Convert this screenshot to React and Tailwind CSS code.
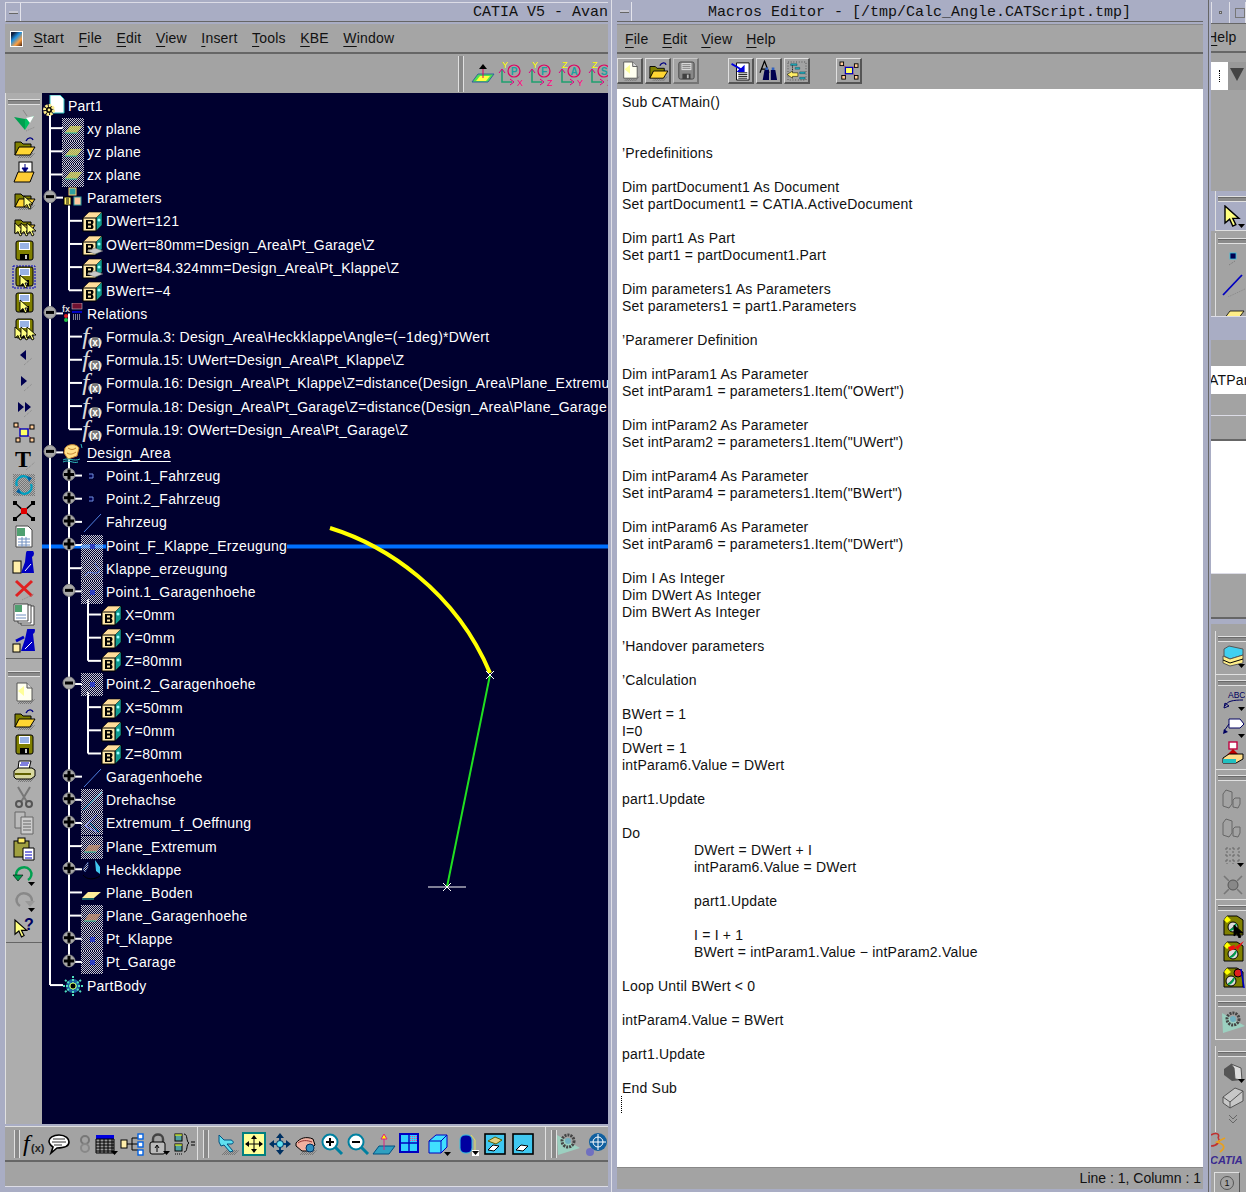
const Ic = ({ children, w = 24, h = 24 }) => (
  <svg viewBox={`0 0 ${w} ${h}`} width={w} height={h} className="block shrink-0">{children}</svg>
)

const Sh = () => <path d="M5 23L19 23L23 18L10 18Z" fill="url(#dith)" />
const Dd = ({ x = 18, y = 19 }) => <path d={`M${x} ${y}h7l-3.5 4z`} fill="#000" />
const Cursor = ({ x = 0, y = 0, c = "#ffff80", s = 1 }) => (
  <path transform={`translate(${x} ${y}) scale(${s})`} d="M0 0L0 11L3 8.5L5 13L7 12L5 8L9 8Z" fill={c} stroke="#000" strokeWidth="0.9" />
)
const FolderO = () => (
  <>
    <path d="M3 20V7H9L11 9H19V13H7L3 20Z" fill="#808000" stroke="#000" />
    <path d="M3 20L7 12H23L18 20Z" fill="#ffd633" stroke="#000" />
  </>
)
const FloppyB = ({ lines = "#3366cc" }) => (
  <>
    <rect x="4" y="2" width="17" height="19" rx="2" fill="#808000" stroke="#000" />
    <rect x="7" y="3" width="11" height="8" fill="#fff" />
    <path d="M8 5h9M8 7h9M8 9h9" stroke={lines} />
    <rect x="8" y="15" width="9" height="6" fill="#000" />
    <rect x="13" y="16" width="2" height="4" fill="#ccc" />
  </>
)

const icons = {
  funnel: <Ic><path d="M11 1L15 7" stroke="#888" /><path d="M2 8L13 10L13 21Z" fill="#00a050" /><path d="M13 10L22 7L13 21Z" fill="#00c060" /><path d="M14 9L22 7L18 14Z" fill="#fff" /><path d="M14 22L23 18" stroke="#888" strokeDasharray="1 1" /></Ic>,
  open: <Ic><Sh /><FolderO /><path d="M14 6C16 2 20 2 21 5" fill="none" stroke="#000080" strokeWidth="1.4" /></Ic>,
  docFolder: <Ic><rect x="7" y="1" width="13" height="13" fill="#fff" stroke="#000" /><path d="M13 3v6M10 7l3 4 3-4z" fill="#000080" stroke="#000080" /><path d="M2 21L6 11H22L18 21Z" fill="#ffcc33" stroke="#000" /></Ic>,
  folderCur: <Ic><Sh /><FolderO /><Cursor x={12} y={9} /></Ic>,
  folderCurs: <Ic><FolderO /><Cursor x={3} y={10} /><Cursor x={9} y={10} /><Cursor x={15} y={10} /></Ic>,
  save: <Ic><FloppyB /></Ic>,
  saveSel: <Ic><rect x="1" y="1" width="22" height="22" fill="none" stroke="#0000c0" strokeDasharray="2 1" /><FloppyB /><Cursor x={8} y={10} /></Ic>,
  saveCur: <Ic><FloppyB /><Cursor x={8} y={9} /></Ic>,
  saveCurs: <Ic><FloppyB /><Cursor x={3} y={10} /><Cursor x={9} y={10} /><Cursor x={15} y={10} /></Ic>,
  prev: <Ic><path d="M8 12L14 7V17Z" fill="#000050" /><path d="M12 22L20 15" stroke="#888" strokeDasharray="1 1" /></Ic>,
  next: <Ic><path d="M15 12L9 7V17Z" fill="#000050" /><path d="M12 22L20 15" stroke="#888" strokeDasharray="1 1" /></Ic>,
  next2: <Ic><path d="M12 12L6 7V17ZM19 12L13 7V17Z" fill="#000050" /><path d="M12 22L20 15" stroke="#888" strokeDasharray="1 1" /></Ic>,
  nodes: <Ic><path d="M4 4L12 11M20 6L12 11M6 18L12 11M20 18L12 11" stroke="#cc3366" /><rect x="8" y="8" width="8" height="7" fill="#ffff66" stroke="#0000c0" strokeWidth="1.4" /><rect x="2" y="2" width="4" height="4" fill="#ffcc99" stroke="#000" /><rect x="18" y="4" width="4" height="4" fill="#ffcc99" stroke="#000" /><rect x="4" y="17" width="4" height="4" fill="#ffcc99" stroke="#000" /><rect x="18" y="17" width="4" height="4" fill="#ffcc99" stroke="#000" /></Ic>,
  text: <Ic><text x="3" y="20" fontFamily="Liberation Serif" fontWeight="700" fontSize="24" fill="#000">T</text><path d="M14 23L23 15" stroke="#888" strokeDasharray="1 1" /></Ic>,
  refresh: <Ic><rect x="1" y="1" width="22" height="22" fill="url(#dith)" /><path d="M5 13A7 7 0 0 1 17 6" fill="none" stroke="#00a0c0" strokeWidth="2.4" /><path d="M19 11A7 7 0 0 1 7 18" fill="none" stroke="#00a0c0" strokeWidth="2.4" /><path d="M15 3l5 2-3 4zM9 21l-5-2 3-4z" fill="#0060a0" /></Ic>,
  xnodes: <Ic><path d="M3 4L21 20M21 4L3 20" stroke="#000" strokeWidth="1.6" /><rect x="9" y="9" width="6" height="6" fill="#e00000" /><path d="M1 2h4v4H1zM19 2h4v4h-4zM1 18h4v4H1zM19 18h4v4h-4z" fill="#000" /></Ic>,
  sheet: <Ic><path d="M4 1H16L20 5V22H4Z" fill="#fff" stroke="#444" /><rect x="5" y="3" width="8" height="8" fill="#50a070" /><path d="M6 14h12M6 17h12M6 20h12M10 12v10M14 12v10" stroke="#7090c0" /></Ic>,
  cylPerson: <Ic><rect x="1" y="10" width="8" height="12" fill="#ffeeaa" stroke="#000" /><path d="M14 2a4 4 0 1 1 6 4L22 22H9L13 11Z" fill="#0000c0" /><path d="M13 20L19 13" stroke="#fff" /></Ic>,
  redX: <Ic><path d="M4 4L20 19M20 4L4 19" stroke="#e02020" strokeWidth="3" /><path d="M10 23L22 17" stroke="#888" strokeDasharray="1 1" /></Ic>,
  sheets: <Ic><path d="M9 3H22V22H9Z" fill="#fff" stroke="#444" /><path d="M6 2H19V20H6Z" fill="#fff" stroke="#444" /><path d="M2 1H16V18H2Z" fill="#fff" stroke="#444" /><rect x="3" y="2" width="7" height="7" fill="#50a070" /><path d="M4 12h10M4 15h10" stroke="#7090c0" /></Ic>,
  persons: <Ic><rect x="1" y="15" width="7" height="8" fill="#ffeeaa" stroke="#000" /><path d="M15 1a4 4 0 1 1 6 4L23 22H9L13 10Z" fill="#0000c0" /><path d="M4 12L12 8" stroke="#0000c0" strokeWidth="3" /><path d="M13 20L20 13" stroke="#fff" /></Ic>,
  newDoc: <Ic><Sh /><path d="M5 2H15L20 7V20H5Z" fill="#fffff0" stroke="#555" /><path d="M6 10L12 5L12 15Z" fill="#ffff99" /><path d="M15 2V7H20" fill="#ddd" stroke="#555" /></Ic>,
  print: <Ic><Sh /><path d="M7 2H19L17 10H6Z" fill="#fff" stroke="#000" /><path d="M9 4h8M8 6h8" stroke="#0000c0" /><path d="M2 12L6 9H20L23 11V17L19 20H4L2 18Z" fill="#d8d8a0" stroke="#000" /><path d="M3 15H19" stroke="#606000" strokeWidth="2" /></Ic>,
  scissors: <Ic><path d="M6 2L15 17M18 2L9 17" stroke="#777" strokeWidth="2" /><circle cx="7" cy="19" r="3" fill="none" stroke="#555" strokeWidth="2" /><circle cx="17" cy="19" r="3" fill="none" stroke="#555" strokeWidth="2" /></Ic>,
  copy: <Ic><path d="M3 1H13V17H3Z" fill="#bbb" stroke="#666" /><path d="M9 6H21V23H9Z" fill="#ccc" stroke="#666" /><path d="M11 10h8M11 13h8M11 16h8M11 19h8" stroke="#666" /></Ic>,
  paste: <Ic><rect x="2" y="4" width="15" height="16" fill="#a0a040" stroke="#000" /><rect x="6" y="1" width="7" height="5" fill="#ffee66" stroke="#000" /><path d="M11 11H22V23H11Z" fill="#fff" stroke="#000" /><path d="M13 15h7M13 18h7M13 21h7" stroke="#0000c0" /></Ic>,
  undo: <Ic><path d="M4 12A8 8 0 0 1 18 7C21 11 19 15 16 17" fill="none" stroke="#00a050" strokeWidth="2.4" /><path d="M1 12H11L6 18Z" fill="#00a050" stroke="#000" strokeWidth="0.6" /><Dd x={16} y={19} /></Ic>,
  redo: <Ic><path d="M20 12A8 8 0 0 0 6 7C3 11 5 15 8 17" fill="none" stroke="#888" strokeWidth="2.4" /><path d="M23 12H13L18 18Z" fill="#999" /><Dd x={16} y={19} /></Ic>,
  help: <Ic><Cursor x={3} y={5} s={1.3} /><text x="12" y="15" fontFamily="Liberation Sans" fontWeight="700" fontSize="16" fill="#000060">?</text></Ic>,
  fx: <Ic><text x="2" y="19" fontFamily="Liberation Serif" fontStyle="italic" fontSize="24" fill="#000">f</text><text x="10" y="20" fontFamily="Liberation Sans" fontWeight="700" fontSize="11" fill="#222">(x)</text></Ic>,
  bubble: <Ic><path d="M12 3C19 3 22 7 22 10C22 15 15 16 10 16L4 21L6 15C3 13 2 11 2 9C2 6 6 3 12 3Z" fill="#fff" stroke="#000" strokeWidth="1.6" /><path d="M6 7h12M5 10h14M7 13h8" stroke="#333" /></Ic>,
  chain: <Ic><rect x="8" y="4" width="8" height="8" rx="4" fill="none" stroke="#777" strokeWidth="2" /><circle cx="12" cy="16" r="4" fill="none" stroke="#888" strokeWidth="2" /></Ic>,
  table: <Ic><rect x="2" y="3" width="18" height="4" fill="#0000e0" /><path d="M2 7H20V21H2Z" fill="#999" stroke="#000" /><path d="M2 10H20M2 13H20M2 16H20M2 19H20M6 7V21M10 7V21M14 7V21M18 7V21" stroke="#000" /><Dd x={17} y={19} /></Ic>,
  diagram: <Ic><path d="M6 12H18M12 6V18M12 6H18M12 18H18" stroke="#000" /><rect x="1" y="8" width="6" height="8" fill="#ffeeaa" stroke="#000" /><rect x="18" y="2" width="5" height="5" fill="#fff" stroke="#0060e0" strokeWidth="1.4" /><rect x="18" y="10" width="5" height="5" fill="#fff" stroke="#0060e0" strokeWidth="1.4" /><rect x="18" y="18" width="5" height="5" fill="#fff" stroke="#0060e0" strokeWidth="1.4" /></Ic>,
  lock: <Ic><path d="M7 11V7C7 1 17 1 17 7V11" fill="none" stroke="#444" strokeWidth="2.4" /><rect x="4" y="10" width="15" height="12" rx="2" fill="#bbb" stroke="#000" /><path d="M11 14v6M9 16l2-3 2 3" stroke="#000" fill="none" /><Dd x={17} y={19} /></Ic>,
  bracket: <Ic><rect x="3" y="2" width="7" height="7" fill="#50a0a0" stroke="#000" /><rect x="3" y="12" width="7" height="7" fill="#50a0a0" stroke="#000" /><path d="M3 3h7M3 13h7" stroke="#ffff00" /><path d="M12 2C16 2 14 10 17 11C14 12 16 20 12 20" fill="none" stroke="#000" /><path d="M19 10h4M19 13h4" stroke="#000" /><path d="M3 22h7" stroke="#000" strokeDasharray="1 1" /></Ic>,
  plane: <Ic><Sh /><path d="M3 3L8 8L15 8C18 9 18 12 15 12L11 12L17 19L14 20L8 13L5 14L3 10Z" fill="#60e0f0" stroke="#005080" /></Ic>,
  fit: <Ic><rect x="1" y="1" width="22" height="22" fill="#ffff99" stroke="#008080" strokeWidth="2" /><path d="M12 4V20M4 12H20" stroke="#000" /><path d="M12 3l-3 4h6zM12 21l-3-4h6zM3 12l4-3v6zM21 12l-4-3v6z" fill="#000" /></Ic>,
  move: <Ic><path d="M12 3V21M3 12H21" stroke="#004080" strokeWidth="2" /><path d="M12 1l-4 5h8zM12 23l-4-5h8zM1 12l5-4v8zM23 12l-5-4v8z" fill="#003060" /><circle cx="12" cy="12" r="3.5" fill="#60e0f0" stroke="#003060" /></Ic>,
  hand: <Ic><Sh /><path d="M2 11C6 6 12 4 19 7L21 13L14 19H8L2 14Z" fill="#f0b0a0" stroke="#000" /><path d="M4 11C8 8 13 8 18 10" stroke="#903030" fill="none" /><circle cx="16" cy="16" r="4" fill="#3090c0" stroke="#003060" /></Ic>,
  zoomIn: <Ic><path d="M15 15L22 22" stroke="#0080a0" strokeWidth="3" /><circle cx="10" cy="10" r="7.5" fill="#fff" stroke="#0080a0" strokeWidth="2" /><path d="M10 6V14M6 10H14" stroke="#000" strokeWidth="2" /></Ic>,
  zoomOut: <Ic><path d="M15 15L22 22" stroke="#0080a0" strokeWidth="3" /><circle cx="10" cy="10" r="7.5" fill="#fff" stroke="#0080a0" strokeWidth="2" /><path d="M6 10H14" stroke="#000" strokeWidth="2" /></Ic>,
  normal: <Ic><path d="M1 22L7 14H23L17 22Z" fill="#30a0c0" stroke="#005080" /><path d="M12 18V5" stroke="#e02080" /><path d="M12 2l-3 5h6z" fill="#ffff00" stroke="#e02080" /></Ic>,
  views: <Ic><rect x="2" y="2" width="18" height="18" fill="#30d0ff" stroke="#0000c0" strokeWidth="2" /><path d="M11 2V20M2 11H20" stroke="#0000c0" strokeWidth="1.4" /><rect x="12" y="3" width="7" height="7" fill="url(#pink)" /></Ic>,
  cube: <Ic><path d="M2 9L9 3H20V15L14 21H2Z" fill="#40e0ff" stroke="#0000c0" /><path d="M2 9H14V21M14 9L20 3" fill="none" stroke="#0000c0" /><Dd x={17} y={20} /></Ic>,
  cyl: <Ic><rect x="5" y="3" width="12" height="18" rx="5" fill="#0000a0" stroke="#30c0e0" /><path d="M16 3L20 8V20" stroke="#e0e060" fill="none" /><rect x="17" y="18" width="7" height="6" fill="#fff" /><Dd x={17} y={19} /></Ic>,
  shade: <Ic><rect x="2" y="2" width="20" height="20" fill="#40c8f0" stroke="#000" strokeWidth="1.6" /><path d="M5 9L12 5L19 8L13 12Z" fill="#e0d080" stroke="#606000" /><path d="M5 18L10 13L16 14L11 19Z" fill="#fff" stroke="#000" /></Ic>,
  shade2: <Ic><rect x="2" y="2" width="20" height="20" fill="#40c8f0" stroke="#000" strokeWidth="1.6" /><path d="M5 18L10 13L17 14L12 19Z" fill="#fff" stroke="#000" /></Ic>,
  gears: <Ic><circle cx="8" cy="13" r="6" fill="none" stroke="#444" strokeWidth="3" strokeDasharray="2 1" /><circle cx="17" cy="9" r="5" fill="none" stroke="#555" strokeWidth="3" strokeDasharray="2 1" /><path d="M3 22L23 15" stroke="#9ccfc0" /></Ic>,
  target: <Ic><circle cx="14" cy="10" r="9" fill="#1060a0" /><circle cx="14" cy="10" r="5" fill="none" stroke="#fff" /><path d="M14 2V18M6 10H22" stroke="#fff" /><circle cx="6" cy="20" r="4" fill="#7070c0" /></Ic>,
  axis0: <Ic><path d="M1 20L7 12H23L17 20Z" fill="#50e050" stroke="#3060a0" /><path d="M5 19L9 14H19L15 19Z" fill="#ffff40" /><path d="M12 16V5" stroke="#e00060" /><path d="M12 2l-4 5h8z" fill="#000" /></Ic>,
  cutBin: <Ic><path d="M5 4L2 8V20L8 22L11 18V6Z" fill="none" stroke="#666" /><path d="M14 12L12 14V21L17 22L19 18V12Z" fill="none" stroke="#666" /></Ic>,
  grid: <Ic><path d="M4 5H20M4 11H20M4 17H20M6 3V20M12 3V20M18 3V20" stroke="#666" strokeDasharray="2 2" /><Dd x={16} y={19} /></Ic>,
  crossSq: <Ic><circle cx="12" cy="12" r="5" fill="#888" stroke="#555" /><path d="M3 3L8 8M21 3L16 8M3 21L8 16M21 21L16 16" stroke="#777" strokeWidth="1.6" /></Ic>,
  layers: <Ic><path d="M3 4L8 1L22 4V10L9 14L3 11Z" fill="#40d0f0" stroke="#555" /><path d="M2 11L9 14L22 10V18L9 21L2 18Z" fill="#ffee88" stroke="#555" /><path d="M2 15L9 18L22 14" fill="none" stroke="#000" /><Dd x={17} y={19} /></Ic>,
  abc: <Ic><text x="7" y="9" fontFamily="Liberation Sans" fontSize="8.5" fill="#000060">ABC</text><path d="M4 17C6 12 12 11 22 11M3 19l1-5 4 3z" fill="none" stroke="#000060" /><Dd x={17} y={18} /></Ic>,
  flag: <Ic><path d="M8 4H19L23 9L19 13H8Z" fill="#fff" stroke="#000060" /><path d="M3 16L8 9" stroke="#000060" /><path d="M2 19l1-5 4 3z" fill="#000060" /><Dd x={17} y={19} /></Ic>,
  stamp: <Ic><rect x="8" y="1" width="8" height="7" fill="#fff" stroke="#c00040" strokeWidth="1.4" /><path d="M12 8L6 14H18Z" fill="#c00000" /><path d="M2 17L8 13H22V18L15 22H2Z" fill="#ffdd88" stroke="#000" /><path d="M2 18H15V22H2Z" fill="#20c0c0" /></Ic>,
  folderCursor: <Ic><path d="M3 6L6 2H16L22 6V21H3Z" fill="#808000" stroke="#000" /><path d="M3 6L6 2L10 6L6 9Z" fill="#ffff00" /><circle cx="12" cy="13" r="5" fill="#ddd" stroke="#000" /><path d="M9 16C11 16 14 14 15 10" stroke="#00a050" strokeWidth="2" /><Cursor x={13} y={11} c="#000" /></Ic>,
  folderBolt: <Ic><path d="M3 6L6 2H16L22 6V21H3Z" fill="#808000" stroke="#000" /><path d="M3 6L6 2L10 6L6 9Z" fill="#ffff00" /><circle cx="12" cy="14" r="5" fill="#ddd" stroke="#000" /><path d="M9 17C11 17 14 15 15 11" stroke="#00a050" strokeWidth="2" /><path d="M7 7L14 5L13 8L23 1L16 11L16 8L9 11Z" fill="#f01010" /></Ic>,
  folderTool: <Ic><path d="M3 6L6 2H16L22 6V21H3Z" fill="#808000" stroke="#000" /><path d="M3 6L6 2L10 6L6 9Z" fill="#ffff00" /><circle cx="10" cy="15" r="5" fill="#ddd" stroke="#000" /><path d="M7 18C9 18 12 16 13 12" stroke="#00a050" strokeWidth="2" /><circle cx="17" cy="7" r="4" fill="#e02020" stroke="#000" /><path d="M20 3L23 22" stroke="#0000c0" strokeWidth="1.6" /></Ic>,
  partCyl: <Ic><path d="M3 9L10 4L20 8L21 20L11 21L3 15Z" fill="#555" /><path d="M10 4L20 8L21 20L14 19L13 8Z" fill="#ddd" stroke="#555" /><Dd x={17} y={19} /></Ic>,
  partBox: <Ic><path d="M2 11L14 2L22 5V15L9 22L2 17Z" fill="#c8c8c8" stroke="#555" /><path d="M2 11L9 16V22M9 16L22 5" fill="none" stroke="#555" /></Ic>,
  chev: <Ic><path d="M8 3L12 7L16 3M8 7L12 11L16 7" fill="none" stroke="#666" /></Ic>,
  dot: <Ic><rect x="9" y="6" width="6" height="6" fill="#000050" stroke="#30c0e0" strokeWidth="0.8" /><path d="M8 18L14 14" stroke="#777" strokeDasharray="1 1" /></Ic>,
  diagLine: <Ic><path d="M2 22L21 2" stroke="#0000c0" strokeWidth="1.8" /><path d="M7 24L24 16" stroke="#888" strokeDasharray="1 1" /></Ic>,
  yellowPlane: <Ic><path d="M3 20L9 12H23L17 20Z" fill="#ffee88" stroke="#000" strokeWidth="0.8" /></Ic>,
  gearTri: <Ic><path d="M1 3L24 16L2 23Z" fill="#9cd0c0" /><circle cx="12" cy="9" r="6" fill="none" stroke="#444" strokeWidth="3" strokeDasharray="2 1" /><circle cx="12" cy="9" r="3" fill="#70b0c0" /></Ic>,
  cursorY: <Ic><Cursor x={4} y={1} s={1.55} /><Dd x={17} y={19} /></Ic>,
  docArrow: <Ic><path d="M7 3H21V22H7Z" fill="#fff" stroke="#000" /><path d="M9 14h10M9 16h10M9 18h10M9 20h10" stroke="#000" /><path d="M2 3L12 9L16 5V13H7L10 10L1 5Z" fill="#0000e0" /></Ic>,
  binoc: <Ic><path d="M2 14L7 1L12 14M4 10H10" fill="none" stroke="#000" strokeWidth="1.4" /><path d="M7 11H12V22H5Z M14 11H19L21 22H14Z" fill="#000050" /><path d="M8 8H11V11H8ZM15 8H18V11H15Z" fill="#3060c0" /></Ic>,
  treeMove: <Ic><rect x="2" y="2" width="20" height="20" fill="none" stroke="#444" strokeDasharray="1 2" /><path d="M5 4H12V6H5ZM10 8H15V10H10ZM15 13H21V15H15ZM15 19H21V21H15Z" fill="#20b0c0" stroke="#004050" strokeWidth="0.5" /><path d="M7 6V11" stroke="#000" strokeDasharray="1 1" /><path d="M1 16L7 12V14H13V18H7V20Z" fill="#ffee66" stroke="#000" strokeWidth="0.6" /></Ic>,
}

const Axis = ({ a, l1, l2 }) => (
  <Ic w={28} h={28}>
    <path d="M5 10V22H15" fill="none" stroke="#20a070" strokeWidth="1.6" />
    <path d="M2 13L5 9L8 13M13 19L17 22L13 25" fill="none" stroke="#e00080" />
    <circle cx="17" cy="11" r="6" fill="#a3a3a3" stroke="#e00060" strokeWidth="1.2" />
    <text x="17" y="15" textAnchor="middle" fontFamily="Liberation Sans" fontWeight="700" fontSize="10" fill="#20a0a0">{a}</text>
    <text x="5" y="8" fontFamily="Liberation Sans" fontSize="9" fill="#ffff00">{l1}</text>
    <text x="20" y="26" fontFamily="Liberation Sans" fontSize="9" fill="#ff0080">{l2}</text>
  </Ic>
)

// tree icons
const hatchBg = <rect width="22" height="23" fill="url(#hatch)" />
const Tree = ({ children }) => <svg viewBox="0 0 22 23" width="22" height="23" className="block shrink-0">{children}</svg>
const BBox = ({ hat }) => (
  <>
    <path d="M2 8L8 2H21V15L15 21H2Z" fill="#ffdc9a" stroke="#000" strokeWidth="0.6" />
    <path d="M15 8L21 2V15L15 21Z" fill="#109a90" stroke="#000" strokeWidth="0.5" />
    <circle cx="18" cy="10" r="1.5" fill="#9ff" />
    <rect x="2" y="8" width="13" height="13" fill="#ffe8a8" stroke="#000" />
    <path d="M5 10H11C13 10 13 14 11 14.5C13 15 13 19 11 19H5ZM7 11.5V13.5H10V11.5ZM7 15.5V17.5H10V15.5Z" fill="#000" fillRule="evenodd" />
    {hat && <path d="M6 17L14 14L22 17L14 20Z" fill="#c8c8c8" stroke="#555" strokeWidth="0.4" />}
  </>
)
const treeIcons = {
  part: <Tree><path d="M7 0H17L21 4V18H7Z" fill="#fff" stroke="#30c0c0" /><circle cx="6" cy="15" r="4.5" fill="#000" stroke="#ffee88" strokeWidth="3" strokeDasharray="2.4 1" /><circle cx="6" cy="15" r="1.4" fill="#ffee88" /></Tree>,
  plane: <Tree>{hatchBg}<path d="M3 15L8 8H20L15 15Z" fill="#d0d060" fillOpacity="0.8" /><path d="M3 15H15" stroke="#30c0a0" /></Tree>,
  params: <Tree><rect x="7" y="1" width="7" height="7" fill="#30a0a0" stroke="#ffcc66" /><rect x="2" y="10" width="7" height="8" fill="#ffee66" stroke="#000" /><rect x="12" y="10" width="7" height="8" fill="#ffc8a0" stroke="#30a0a0" /><path d="M4 12h3M4 14h3M4 16h3" stroke="#000" /></Tree>,
  b: <Tree><BBox /></Tree>,
  bh: <Tree><BBox hat /></Tree>,
  rel: <Tree><text x="0" y="9" fontFamily="Liberation Sans" fontWeight="700" fontSize="9" fill="#ddd">fx</text><rect x="10" y="0" width="10" height="6" fill="#701030" stroke="#ddd" strokeWidth="0.5" /><rect x="10" y="8" width="10" height="2" fill="#0000c0" /><path d="M11 12h8M11 14h8M11 16h8" stroke="#fff" strokeDasharray="1 1" /><circle cx="4" cy="13" r="2" fill="#e02020" /><circle cx="4" cy="17" r="2" fill="#20c040" /></Tree>,
  fx: <Tree><ellipse cx="14" cy="16" rx="7" ry="5" fill="#777" /><text x="1" y="19" fontFamily="Liberation Serif" fontStyle="italic" fontSize="26" fill="#d8d8d8">f</text><text x="8" y="20" fontFamily="Liberation Sans" fontWeight="700" fontSize="10" fill="#fff">(x)</text></Tree>,
  body: <Tree><path d="M3 6C7 1 15 2 17 6L15 14L6 17L2 11Z" fill="#ffe088" stroke="#c08030" /><path d="M6 6C9 8 11 8 14 6M5 11C8 13 11 12 14 10" stroke="#c08030" fill="none" /><path d="M1 18C6 15 12 20 18 17M1 20C6 17 12 22 16 20" stroke="#30c0c0" fill="none" /><path d="M19 2L20 6" stroke="#30c0c0" /></Tree>,
  point: <Tree><path d="M8 9h4v4H8" fill="#000050" stroke="#7090e0" /></Tree>,
  line: <Tree><path d="M3 21L20 3" stroke="#5080e0" /></Tree>,
  hpoint: <Tree>{hatchBg}<rect x="9" y="9" width="5" height="5" fill="#3040c0" /></Tree>,
  hcurve: <Tree>{hatchBg}<path d="M4 18C8 10 12 18 18 14C19 10 15 9 14 5" fill="none" stroke="#6080e0" /></Tree>,
  hline: <Tree>{hatchBg}<path d="M2 21L21 3" stroke="#40c0e0" /></Tree>,
  hext: <Tree>{hatchBg}<path d="M16 3L4 14L16 20" fill="none" stroke="#8090ff" /><path d="M9 11L18 20" stroke="#40c0e0" /></Tree>,
  hplane: <Tree>{hatchBg}<path d="M3 16L8 9H20L15 16Z" fill="#c09070" fillOpacity="0.8" /><path d="M3 16H15" stroke="#30c0a0" /></Tree>,
  heck: <Tree><path d="M2 10L7 3V8L4 13Z" fill="url(#hatch)" stroke="#5080e0" strokeWidth="0.4" /><path d="M14 1L19 8V15L15 12Z" fill="#40c8f0" /><path d="M2 16C6 21 13 21 19 17" fill="none" stroke="#000" /></Tree>,
  yplane: <Tree><path d="M1 16L7 10H20L13 16Z" fill="#ffee99" /><path d="M1 17H13" stroke="#30c0a0" /></Tree>,
  pbody: <Tree><circle cx="11" cy="11" r="7" fill="#1a60a0" /><path d="M3 5L19 17M19 5L3 17M11 1V21M1 11H21" stroke="#50e0c0" strokeWidth="2" strokeDasharray="2 1" /><circle cx="11" cy="11" r="3" fill="#000" stroke="#c0e060" /></Tree>,
}

const rows = [
  { t: "Part1", d: 0, i: "part" },
  { t: "xy plane", d: 1, i: "plane" },
  { t: "yz plane", d: 1, i: "plane" },
  { t: "zx plane", d: 1, i: "plane" },
  { t: "Parameters", d: 1, i: "params", e: "-" },
  { t: "DWert=121", d: 2, i: "b" },
  { t: "OWert=80mm=Design_Area\\Pt_Garage\\Z", d: 2, i: "bh" },
  { t: "UWert=84.324mm=Design_Area\\Pt_Klappe\\Z", d: 2, i: "bh" },
  { t: "BWert=−4", d: 2, i: "b" },
  { t: "Relations", d: 1, i: "rel", e: "-" },
  { t: "Formula.3: Design_Area\\Heckklappe\\Angle=(−1deg)*DWert", d: 2, i: "fx" },
  { t: "Formula.15: UWert=Design_Area\\Pt_Klappe\\Z", d: 2, i: "fx" },
  { t: "Formula.16: Design_Area\\Pt_Klappe\\Z=distance(Design_Area\\Plane_Extremu", d: 2, i: "fx" },
  { t: "Formula.18: Design_Area\\Pt_Garage\\Z=distance(Design_Area\\Plane_Garage", d: 2, i: "fx" },
  { t: "Formula.19: OWert=Design_Area\\Pt_Garage\\Z", d: 2, i: "fx" },
  { t: "Design_Area", d: 1, i: "body", e: "-", u: true },
  { t: "Point.1_Fahrzeug", d: 2, i: "point", e: "+" },
  { t: "Point.2_Fahrzeug", d: 2, i: "point", e: "+" },
  { t: "Fahrzeug", d: 2, i: "line", e: "+" },
  { t: "Point_F_Klappe_Erzeugung", d: 2, i: "hpoint", e: "+", bg: true },
  { t: "Klappe_erzeugung", d: 2, i: "hcurve" },
  { t: "Point.1_Garagenhoehe", d: 2, i: "hpoint", e: "-" },
  { t: "X=0mm", d: 3, i: "b" },
  { t: "Y=0mm", d: 3, i: "b" },
  { t: "Z=80mm", d: 3, i: "b" },
  { t: "Point.2_Garagenhoehe", d: 2, i: "hpoint", e: "-" },
  { t: "X=50mm", d: 3, i: "b" },
  { t: "Y=0mm", d: 3, i: "b" },
  { t: "Z=80mm", d: 3, i: "b" },
  { t: "Garagenhoehe", d: 2, i: "line", e: "+" },
  { t: "Drehachse", d: 2, i: "hline", e: "+" },
  { t: "Extremum_f_Oeffnung", d: 2, i: "hext", e: "+" },
  { t: "Plane_Extremum", d: 2, i: "hplane" },
  { t: "Heckklappe", d: 2, i: "heck", e: "+" },
  { t: "Plane_Boden", d: 2, i: "yplane" },
  { t: "Plane_Garagenhoehe", d: 2, i: "hplane" },
  { t: "Pt_Klappe", d: 2, i: "hpoint", e: "+" },
  { t: "Pt_Garage", d: 2, i: "hpoint", e: "+" },
  { t: "PartBody", d: 1, i: "pbody" },
]

const code = [
  "Sub CATMain()", "", "", "’Predefinitions", "",
  "Dim partDocument1 As Document", "Set partDocument1 = CATIA.ActiveDocument", "",
  "Dim part1 As Part", "Set part1 = partDocument1.Part", "",
  "Dim parameters1 As Parameters", "Set parameters1 = part1.Parameters", "",
  "’Paramerer Definition", "",
  "Dim intParam1 As Parameter", "Set intParam1 = parameters1.Item(\"OWert\")", "",
  "Dim intParam2 As Parameter", "Set intParam2 = parameters1.Item(\"UWert\")", "",
  "Dim intParam4 As Parameter", "Set intParam4 = parameters1.Item(\"BWert\")", "",
  "Dim intParam6 As Parameter", "Set intParam6 = parameters1.Item(\"DWert\")", "",
  "Dim I As Integer", "Dim DWert As Integer", "Dim BWert As Integer", "",
  "’Handover parameters", "", "’Calculation", "",
  "BWert = 1", "I=0", "DWert = 1", "intParam6.Value = DWert", "",
  "part1.Update", "", "Do",
  "\tDWert = DWert + I", "\tintParam6.Value = DWert", "", "\tpart1.Update", "",
  "\tI = I + 1", "\tBWert = intParam1.Value − intParam2.Value", "",
  "Loop Until BWert < 0", "", "intParam4.Value = BWert", "", "part1.Update", "", "End Sub",
]

const rowY = i => 105 + i * 23.16
const depthPad = ["pl-[1px]", "pl-[20px]", "pl-[39px]", "pl-[58px]"]
const stubX = [0, 50, 69, 88]

const Grip = ({ className = "" }) => (
  <div className={`h-[6px] border-y border-[#e0e0e0] bg-[#8a8a8a] shadow-[inset_0_1px_0_#6a6a6a] ${className}`} />
)
const VGrip = ({ className = "" }) => (
  <div className={`w-[6px] shrink-0 border-x border-[#e0e0e0] bg-[#8a8a8a] ${className}`} />
)
const Menu = ({ items }) => items.map(m => (
  <span key={m} className="tracking-[0.2px]"><span className="underline underline-offset-[3px]">{m[0]}</span>{m.slice(1)}</span>
))
const TitleBtn = () => (
  <div className="w-[15px] h-full flex items-center justify-center border-r border-[#e4e4ec]">
    <div className="w-[9px] h-[3px] bg-[#c8c8d4] border-b border-[#666]" />
  </div>
)
const Slot = ({ n, className = "w-[26px] h-[26px]" }) => (
  <div className={`flex items-center justify-center shrink-0 ${className}`}>{icons[n]}</div>
)
const Raised = ({ n, className = "" }) => (
  <div className={`w-[26px] h-[26px] flex items-center justify-center border-t border-l border-[#e0e0e0] border-b-2 border-r-2 border-b-[#555] border-r-[#555] ${className}`}>
    <div className="scale-[0.9]">{icons[n]}</div>
  </div>
)
const Group = ({ names, className = "", slot = "w-[34px] h-[26px]" }) => (
  <div className={`ml-[4px] pt-[5px] border-l border-b border-[#e0e0e0] shrink-0 ${className}`}>
    <Grip className="ml-[2px] mb-[2px]" />
    <div className="flex flex-col">
      {names.map((n, i) => <Slot key={i} n={n} className={slot} />)}
    </div>
  </div>
)

const firstTools = ["funnel", "open", "docFolder", "folderCur", "folderCurs", "save", "saveSel", "saveCur", "saveCurs", "prev", "next", "next2", "nodes", "text", "refresh", "xnodes", "sheet", "cylPerson", "redX", "sheets", "persons"]
const secondTools = ["newDoc", "open", "save", "print", "scissors", "copy", "paste", "undo", "redo", "help"]
const bottomA1 = ["fx", "bubble", "chain"]
const bottomA2 = ["table", "diagram", "lock", "bracket"]
const bottomB = ["plane", "fit", "move", "hand", "zoomIn", "zoomOut", "normal", "views"]
const bottomC = ["cube", "cyl", "shade", "shade2"]

export default function App() {
  return (
    <div className="relative w-[1246px] h-[1192px] overflow-hidden bg-[#a9adc4] text-[14px] text-[#111]" style={{ fontFamily: '"Liberation Sans", sans-serif' }}>
      <svg width="0" height="0" className="absolute">
        <defs>
          <pattern id="hatch" width="2" height="2" patternUnits="userSpaceOnUse">
            <rect width="1" height="1" fill="#c8c8d0" /><rect x="1" y="1" width="1" height="1" fill="#c8c8d0" />
          </pattern>
          <pattern id="dith" width="2" height="2" patternUnits="userSpaceOnUse">
            <rect width="1" height="1" fill="#777" /><rect x="1" y="1" width="1" height="1" fill="#777" />
          </pattern>
          <pattern id="pink" width="2" height="2" patternUnits="userSpaceOnUse">
            <rect width="1" height="1" fill="#ff4080" /><rect x="1" y="1" width="1" height="1" fill="#30d0ff" />
          </pattern>
        </defs>
      </svg>

      {/* CATIA main window */}
      <div className="absolute left-0 top-0 w-[608px] h-[1192px] pl-[5px] pt-[2px] flex flex-col overflow-hidden">
        <div className="h-[20px] flex border-t border-l border-[#dcdce6] border-b border-b-[#666] shrink-0">
          <TitleBtn />
          <div className="flex-1 font-['Liberation_Mono'] text-[15px] leading-[18px] whitespace-nowrap overflow-hidden pl-[452px] pt-[1px]">CATIA V5 - Avan</div>
        </div>
        <div className="h-[30px] mt-[2px] bg-[#a5a5a5] flex items-center gap-[14.5px] shrink-0 border-b-2 border-[#666] pl-[5px] pt-[1px]">
          <div className="w-[13px] h-[16px] bg-white p-[1px] mr-[-4px] shrink-0">
            <div className="w-full h-full bg-[linear-gradient(135deg,#102040_15%,#2090e0_40%,#ffa040_70%,#402010)]" />
          </div>
          <Menu items={["Start", "File", "Edit", "View", "Insert", "Tools", "KBE", "Window"]} />
        </div>
        <div className="h-[39px] bg-[#a3a3a3] flex items-center shrink-0 pl-[453px]">
          <VGrip className="h-[36px]" />
          <div className="flex ml-[5px]">
            <Slot n="axis0" className="w-[28px] h-[28px]" />
            <Axis a="P" l1="Y" l2="X" />
            <div className="w-[2px] shrink-0" />
            <Axis a="F" l1="Y" l2="Z" />
            <div className="w-[2px] shrink-0" />
            <Axis a="A" l1="Z" l2="Y" />
            <div className="w-[2px] shrink-0" />
            <Axis a="S" l1="Z" l2="X" />
          </div>
        </div>

        <div className="flex-1 flex min-h-0">
          <div className="w-[37px] bg-[#adadad] shrink-0 border-l border-[#e0e0e0]">
            <Grip className="mx-[2px] mt-[6px] mb-[3px]" />
            <div className="flex flex-col items-center border-b border-[#666] pb-[4px]">
              {firstTools.map(n => <Slot key={n} n={n} />)}
            </div>
            <Grip className="mx-[2px] mt-[12px] mb-[3px]" />
            <div className="flex flex-col items-center border-b border-[#666] pb-[2px]">
              {secondTools.map((n, i) => <Slot key={i} n={n} />)}
            </div>
          </div>

          <div className="relative flex-1 bg-[#00002f] overflow-hidden text-white">
            <svg viewBox="42 93 566 1031" className="absolute inset-0 w-full h-full" fill="none">
              <path d="M42 546.5H608" stroke="#0070ff" strokeWidth="4" />
              <path d="M330 528C385 545 455 590 490 673" stroke="#ffff00" strokeWidth="4" />
              <path d="M490 675L447 887" stroke="#20e020" strokeWidth="2" />
              <path d="M428 887H466M443 883L451 891M451 883L443 891M486 671L494 679M494 671L486 679" stroke="#fff" />
              <path d={`M50 115V${rowY(38)}`} stroke="#fff" strokeWidth="2" />
              {[[4, 8], [9, 14], [15, 37]].map(([a, b]) => <path key={a} d={`M69 ${rowY(a)}V${rowY(b)}`} stroke="#fff" strokeWidth="2" />)}
              {[[21, 24], [25, 28]].map(([a, b]) => <path key={a} d={`M88 ${rowY(a) + 8}V${rowY(b)}`} stroke="#fff" strokeWidth="2" />)}
              {rows.map((r, i) => r.d > 0 && <path key={i} d={`M${stubX[r.d]} ${rowY(i)}h13`} stroke="#fff" strokeWidth="2" />)}
              {rows.map((r, i) => r.e && (
                <g key={i} transform={`translate(${stubX[r.d]} ${rowY(i) - 1})`}>
                  <circle r="6" fill="#a8a8a8" stroke="#888" strokeWidth="1" />
                  <path d={r.e === "+" ? "M-5 0H5M0 -5V5" : "M-4 0H4"} stroke="#000" strokeWidth="3" />
                </g>
              ))}
            </svg>
            <div className="relative pt-[1.5px]">
              {rows.map((r, i) => (
                <div key={i} className={`h-[23.16px] flex items-center gap-[3px] whitespace-nowrap ${depthPad[r.d]}`}>
                  {treeIcons[r.i]}
                  <span className={`tracking-[0.25px] ${r.u ? "underline underline-offset-[3px]" : ""} ${r.bg ? "bg-[#00002f]" : ""}`}>{r.t}</span>
                </div>
              ))}
            </div>
          </div>
        </div>

        <div className="h-[36px] mt-[2px] bg-[#a3a3a3] flex items-center shrink-0 border-b-2 border-[#666] border-t border-t-[#e0e0e0] pl-[8px] overflow-hidden">
          <VGrip className="h-[28px] ml-[1px]" />
          <div className="flex">{bottomA1.map(n => <Slot key={n} n={n} />)}</div>
          <div className="flex ml-[-5px]">{bottomA2.map(n => <Slot key={n} n={n} />)}</div>
          <div className="w-px h-[34px] bg-[#e0e0e0] mr-[5px] shrink-0" />
          <VGrip className="h-[28px]" />
          <div className="flex ml-[6px]">{bottomB.map(n => <Slot key={n} n={n} />)}</div>
          <div className="flex ml-[2px]">{bottomC.map(n => <Slot key={n} n={n} className="w-[28px] h-[26px]" />)}</div>
          <div className="w-px h-[34px] bg-[#e0e0e0] ml-[8px] mr-[5px] shrink-0" />
          <VGrip className="h-[28px]" />
          <div className="flex ml-[-3px]"><Slot n="gearTri" className="w-[28px] h-[26px]" /><Slot n="target" className="w-[28px] h-[26px]" /></div>
        </div>
        <div className="h-[24px] bg-[#a3a3a3] shrink-0" />
        <div className="h-[5px] mb-[1px] shrink-0 border-t border-[#dcdce6]" />
      </div>

      {/* Macros editor window */}
      <div className="absolute left-[611px] top-0 w-[598px] h-[1192px] pt-[2px] px-[5px] flex flex-col border-x border-[#e0e0e8] border-r-[#666]">
        <div className="h-[20px] flex border-b border-[#666] shrink-0">
          <TitleBtn />
          <div className="flex-1 text-center font-['Liberation_Mono'] text-[15px] leading-[18px] whitespace-nowrap pt-[2px] pl-[4px]">Macros Editor - [/tmp/Calc_Angle.CATScript.tmp]</div>
        </div>
        <div className="h-[30px] mt-[2px] bg-[#a5a5a5] flex items-center gap-[14px] pl-[8px] shrink-0 border-b-2 border-[#666] border-t border-t-[#888] pt-[1px]">
          <Menu items={["File", "Edit", "View", "Help"]} />
        </div>
        <div className="h-[35px] bg-[#a3a3a3] flex items-center shrink-0 pb-[1px]">
          <Raised n="newDoc" />
          <Raised n="open" className="ml-[2px]" />
          <Raised n="save" className="ml-[2px] opacity-60 grayscale" />
          <Raised n="docArrow" className="ml-[29px]" />
          <Raised n="binoc" className="ml-[2px]" />
          <Raised n="treeMove" className="ml-[2px]" />
          <Raised n="nodes" className="ml-[26px]" />
        </div>
        <div className="flex-1 bg-white pt-[5px] pl-[5px] text-[#111] relative min-h-0">
          {code.map((l, i) => (
            <div key={i} className={`h-[17px] leading-[17px] whitespace-pre tracking-[0.2px] ${l.startsWith("\t") ? "pl-[72px]" : ""}`}>{l.trim()}</div>
          ))}
          <div className="absolute left-[4px] top-[1007px] w-px h-[17px] border-l border-dotted border-black" />
        </div>
        <div className="h-[22px] bg-[#a3a3a3] shrink-0 text-right pr-[2px] leading-[20px] border-t border-[#888]">Line : 1, Column : 1</div>
        <div className="h-[3px] shrink-0" />
      </div>

      {/* right CATIA window, mostly hidden */}
      <div className="absolute left-[1211px] top-0 w-[35px] h-[1192px] overflow-hidden flex flex-col">
        <div className="h-[22px] mt-[2px] flex border-b border-[#666] shrink-0">
          <div className="w-[19px] border-x border-[#e0e0e8] flex items-center justify-center"><div className="w-[3px] h-[3px] bg-[#ccc] border border-[#666]" /></div>
          <div className="w-[16px] flex items-center justify-center border-r border-[#e0e0e8]"><div className="w-[10px] h-[10px] border border-[#777] ml-[5px]" /></div>
        </div>
        <div className="h-[29px] bg-[#a5a5a5] border-b-2 border-[#666] leading-[26px] shrink-0 relative">
          <span className="absolute left-[-4px] top-0 tracking-[0.2px]"><span className="underline underline-offset-[3px]">H</span>elp</span>
        </div>
        <div className="h-[138px] bg-[#a3a3a3] shrink-0 pt-[9px]">
          <div className="h-[28px] flex">
            <div className="w-[17px] bg-white flex items-center justify-center"><div className="h-[12px] border-l border-dotted border-black" /></div>
            <div className="flex-1 bg-[#999] flex items-start justify-center pt-[6px]"><div className="w-0 h-0 border-x-[7px] border-x-transparent border-t-[13px] border-t-[#444]" /></div>
          </div>
        </div>
        <Group names={["cursorY"]} className="h-[40px]" />
        <div className="h-[85px] shrink-0 bg-[#a3a3a3] overflow-hidden">
          <Group names={["dot", "diagLine", "yellowPlane"]} className="mt-[2px] border-b-0" />
        </div>
        <div className="h-[24px] shrink-0 border-t border-[#dcdce6] bg-[#a9adc4]" />
        <div className="h-[26px] bg-[#a3a3a3] shrink-0" />
        <div className="h-[28px] bg-white shrink-0 relative leading-[28px]"><span className="absolute left-[-2px] tracking-[0.2px]">ATPar</span></div>
        <div className="h-[22px] bg-[#a3a3a3] shrink-0 border-b border-[#dcdce6]" />
        <div className="h-[25px] bg-[#a3a3a3] shrink-0 border-b-2 border-[#666]" />
        <div className="h-[132px] bg-white shrink-0" />
        <div className="h-[46px] bg-[#a3a3a3] shrink-0 border-t border-[#dcdce6] border-b-2 border-b-[#666]" />
        <div className="h-[5px] shrink-0" />
        <div className="flex-1 bg-[#a3a3a3] pt-[7px] flex flex-col min-h-0">
          <Group names={["layers"]} className="pb-[4px]" />
          <Group names={["abc", "flag", "stamp"]} className="pb-[3px]" />
          <Group names={["cutBin", "cutBin", "grid", "crossSq"]} slot="w-[34px] h-[29px]" />
          <Group names={["folderCursor", "folderBolt", "folderTool"]} className="pb-[4px]" />
          <Group names={["gearTri"]} className="pb-[4px]" />
          <Group names={["partCyl", "partBox", "chev"]} className="mt-[6px] border-b-0 h-[86px]" />
          <div className="relative h-[40px] shrink-0">
            <svg viewBox="0 0 35 24" width="35" height="24" className="block">
              <path d="M0 3C6 0 9 2 7 6M7 6C10 9 6 14 0 14" fill="none" stroke="#c03030" strokeWidth="1.6" />
              <path d="M14 6L6 10C12 12 16 15 9 20" fill="none" stroke="#e8a020" strokeWidth="1.8" />
            </svg>
            <div className="absolute left-[-1px] top-[22px] text-[11px] leading-[13px] italic font-bold text-[#3a2a90]">CATIA</div>
          </div>
          <div className="w-[26px] h-[22px] ml-[3px] shrink-0 border border-[#e0e0e0] border-b-[#555] border-r-[#555] flex items-center justify-center text-[9px]">
            <div className="w-[14px] h-[14px] rounded-full border border-[#555] text-center leading-[12px]">1</div>
          </div>
        </div>
      </div>
    </div>
  )
}
